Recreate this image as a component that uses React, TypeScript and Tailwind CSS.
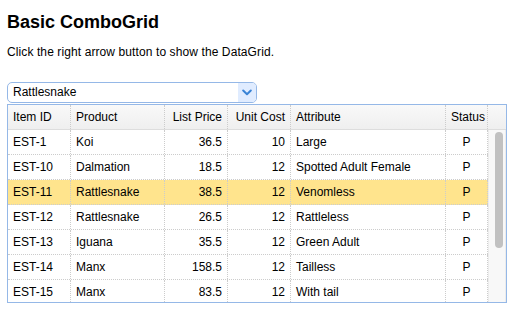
import React from "react";

const cols = [
  { key: "id", label: "Item ID", w: "w-[63px]", align: "text-left" },
  { key: "product", label: "Product", w: "w-[94px]", align: "text-left" },
  { key: "price", label: "List Price", w: "w-[63px]", align: "text-right" },
  { key: "cost", label: "Unit Cost", w: "w-[63px]", align: "text-right" },
  { key: "attr", label: "Attribute", w: "w-[155px]", align: "text-left" },
  { key: "status", label: "Status", w: "w-[42px]", align: "text-center" },
];

const rows = [
  ["EST-1", "Koi", "36.5", "10", "Large", "P"],
  ["EST-10", "Dalmation", "18.5", "12", "Spotted Adult Female", "P"],
  ["EST-11", "Rattlesnake", "38.5", "12", "Venomless", "P"],
  ["EST-12", "Rattlesnake", "26.5", "12", "Rattleless", "P"],
  ["EST-13", "Iguana", "35.5", "12", "Green Adult", "P"],
  ["EST-14", "Manx", "158.5", "12", "Tailless", "P"],
  ["EST-15", "Manx", "83.5", "12", "With tail", "P"],
];

export default function App() {
  return (
    <div
      className="w-[521px] h-[315px] bg-white text-black px-[7px] overflow-hidden"
      style={{ fontFamily: '"Liberation Sans", Arial, sans-serif' }}
    >
      <h2 className="mt-[11px] text-[18px] leading-[22px] font-bold">Basic ComboGrid</h2>
      <p className="mt-[11px] text-[12px] leading-[16px] tracking-[0.1px]">
        Click the right arrow button to show the DataGrid.
      </p>
      <div className="mt-[22px] w-[250px] h-[21px] border border-[#95b8e7] rounded-[5px] flex overflow-hidden">
        <div className="flex-1 pl-[5px] text-[12px] leading-[19px]">Rattlesnake</div>
        <div className="w-[18px] bg-[#e0ecff] flex items-center justify-center">
          <svg width="10" height="7" viewBox="0 0 10 7">
            <path d="M1.2 1.5 L5 5.2 L8.8 1.5" fill="none" stroke="#3a84d6" strokeWidth="2" strokeLinecap="round" strokeLinejoin="round" />
          </svg>
        </div>
      </div>
      <div className="mt-[1px] w-[500px] h-[199px] border border-[#95b8e7] overflow-hidden text-[12px]">
        <div className="flex h-[25px] border-b border-[#ddd] bg-gradient-to-b from-[#f9f9f9] to-[#efefef]">
          {cols.map((c) => (
            <div
              key={c.key}
              className={`${c.w} ${c.align} shrink-0 h-full border-r border-dotted border-[#ccc] px-[5px] leading-[24px] whitespace-nowrap overflow-hidden`}
            >
              {c.label}
            </div>
          ))}
          <div className="flex-1" />
        </div>
        <div className="flex">
          <div className="w-[480px] shrink-0">
            {rows.map((r, i) => (
              <div
                key={i}
                className={`flex h-[25px] border-b border-dotted border-[#ccc] ${i === 2 ? "bg-[#ffe48d]" : "bg-white"}`}
              >
                {cols.map((c, j) => (
                  <div
                    key={c.key}
                    className={`${c.w} ${c.align} shrink-0 h-full border-r border-dotted border-[#ccc] px-[5px] leading-[24px] whitespace-nowrap overflow-hidden`}
                  >
                    {r[j]}
                  </div>
                ))}
              </div>
            ))}
          </div>
          <div className="w-[18px] h-[180px] bg-[#f8f8f8] border-l border-r border-[#ececec] pt-[2px] pl-[6px]">
            <div className="w-[8px] h-[116px] rounded-full bg-[#c1c1c1]" />
          </div>
        </div>
      </div>
    </div>
  );
}
